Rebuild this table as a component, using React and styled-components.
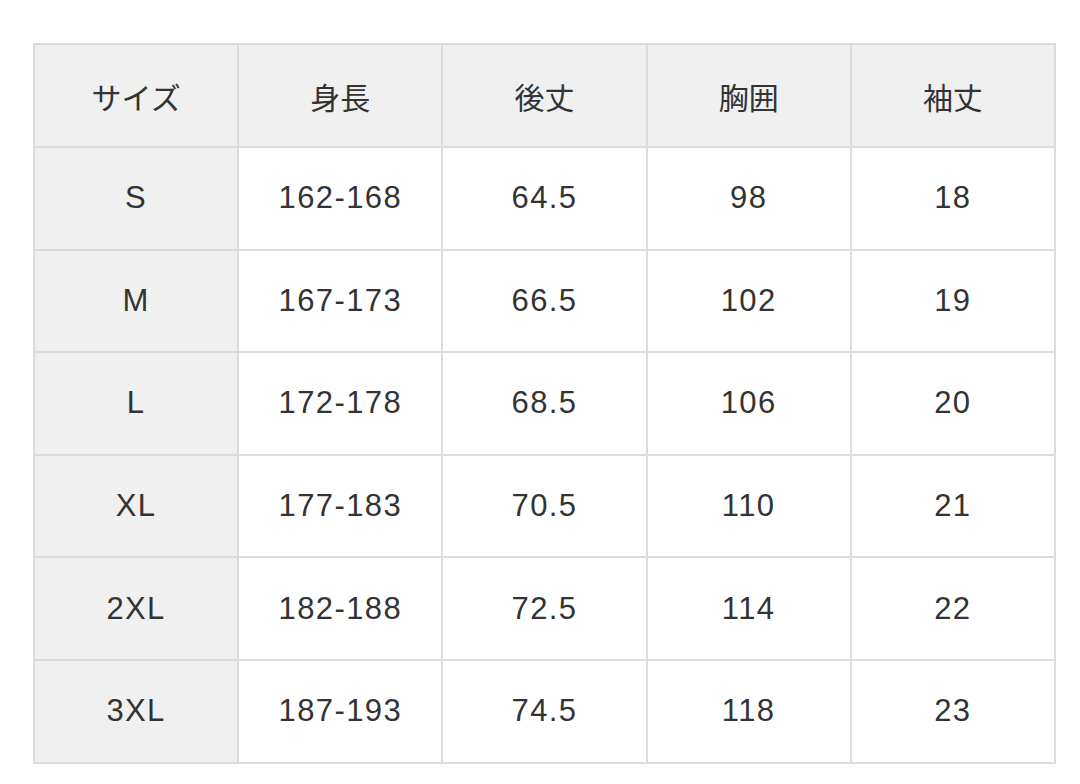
import React from 'react';
import styled, { createGlobalStyle } from 'styled-components';

const GlobalStyle = createGlobalStyle`
  html, body {
    margin: 0;
    padding: 0;
    background: #ffffff;
  }
  body {
    font-family: "Liberation Sans", "Noto Sans CJK JP", sans-serif;
    color: #333333;
  }
`;

const Page = styled.div`
  width: 1080px;
  height: 784px;
  padding: 43px 0 0 33px;
  box-sizing: border-box;
`;

const Table = styled.table`
  width: 1023px;
  border-collapse: collapse;
  table-layout: fixed;
  border: 2px solid #dcdcdc;
`;

const Cell = styled.td`
  height: 100.6px;
  padding: 0;
  border: 2px solid #dcdcdc;
  text-align: center;
  vertical-align: middle;
  font-size: 31px;
  letter-spacing: 1.4px;
  color: #333333;
  background: ${(props) => (props.$shaded ? '#f0f0f0' : '#ffffff')};
`;

const HeadCell = styled(Cell).attrs({ as: 'th' })`
  height: 101px;
  font-weight: 400;
  font-size: 30px;
  letter-spacing: 0;
  font-family: "Noto Sans CJK JP", sans-serif;
`;

const headers = ['サイズ', '身長', '後丈', '胸囲', '袖丈'];

const rows = [
  ['S', '162-168', '64.5', '98', '18'],
  ['M', '167-173', '66.5', '102', '19'],
  ['L', '172-178', '68.5', '106', '20'],
  ['XL', '177-183', '70.5', '110', '21'],
  ['2XL', '182-188', '72.5', '114', '22'],
  ['3XL', '187-193', '74.5', '118', '23'],
];

const App = () => {
  return (
    <>
      <GlobalStyle />
      <Page>
        <Table>
          <thead>
            <tr>
              {headers.map((h) => (
                <HeadCell key={h} $shaded>
                  {h}
                </HeadCell>
              ))}
            </tr>
          </thead>
          <tbody>
            {rows.map((row) => (
              <tr key={row[0]}>
                {row.map((value, i) => (
                  <Cell key={i} $shaded={i === 0}>
                    {value}
                  </Cell>
                ))}
              </tr>
            ))}
          </tbody>
        </Table>
      </Page>
    </>
  );
};

export default App;
